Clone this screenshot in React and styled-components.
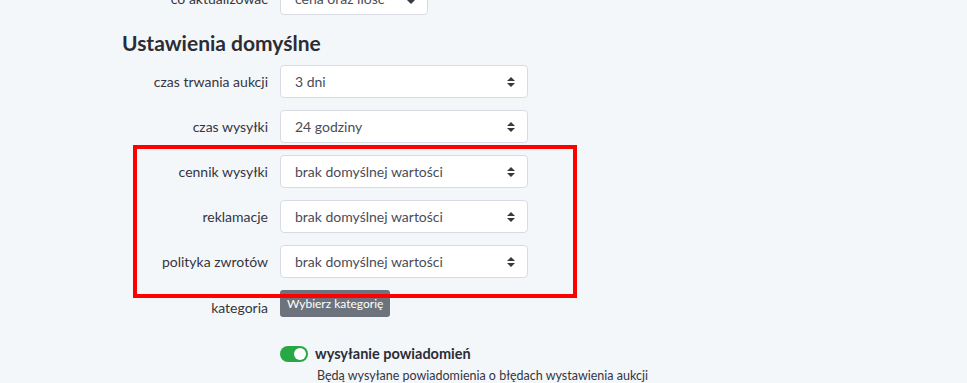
import React from "react";
import styled, { createGlobalStyle } from "styled-components";

const GlobalStyle = createGlobalStyle`
  body {
    margin: 0;
    background: #f4f7fa;
    font-family: "Lato", "Noto Sans", sans-serif;
    color: #3a3b45;
  }
`;

const Page = styled.div`
  position: relative;
  width: 967px;
  height: 383px;
  overflow: hidden;
`;

const Form = styled.div`
  margin-top: -18px;
  padding-left: 122px;
`;

const Grid = styled.div`
  display: grid;
  grid-template-columns: 146px auto;
  column-gap: 12px;
  row-gap: 12px;
  align-items: center;
`;

const Label = styled.div`
  text-align: right;
  font-size: 14px;
  color: #34353f;
  padding-top: ${(p) => (p.$low ? "8px" : "0")};
`;

const Heading = styled.h5`
  margin: 16px 0 10px;
  font-size: 21px;
  font-weight: 700;
  color: #2b2d36;
  line-height: 24px;
`;

const SelectBox = styled.div`
  box-sizing: border-box;
  width: ${(p) => p.$width || 248}px;
  height: 33px;
  display: flex;
  align-items: center;
  justify-content: space-between;
  padding: 0 12px 0 14px;
  background: #fff;
  border: 1px solid #d8dbe3;
  border-radius: 4px;
  font-size: 14px;
  color: #4a4c57;
`;

const Button = styled.button`
  justify-self: start;
  height: 27px;
  padding: 0 7px;
  border: none;
  border-radius: 3px;
  background: #6c737c;
  color: #fff;
  font-family: inherit;
  font-size: 12px;
`;

const ToggleRow = styled.div`
  display: flex;
  align-items: center;
  gap: 7px;
  margin: 28px 0 0 158px;
`;

const Toggle = styled.span`
  position: relative;
  width: 28px;
  height: 16px;
  border-radius: 8px;
  background: #28a745;

  &::after {
    content: "";
    position: absolute;
    top: 2px;
    right: 2px;
    width: 12px;
    height: 12px;
    border-radius: 50%;
    background: #fff;
  }
`;

const ToggleLabel = styled.span`
  font-size: 14.5px;
  font-weight: 700;
  color: #2b2d36;
`;

const Help = styled.div`
  margin: 6px 0 0 195px;
  font-size: 12.5px;
  color: #34353f;
`;

const Highlight = styled.div`
  position: absolute;
  left: 133px;
  top: 145px;
  width: 444px;
  height: 153px;
  box-sizing: border-box;
  border: 4px solid #ff0000;
  pointer-events: none;
`;

const Arrows = () => (
  <svg width="8" height="10" viewBox="0 0 8 10">
    <path d="M4 0 L8 4 H0 Z M0 6 H8 L4 10 Z" fill="#343a40" />
  </svg>
);

const Select = ({ value, width }) => (
  <SelectBox $width={width}>
    <span>{value}</span>
    <Arrows />
  </SelectBox>
);

const rows = [
  ["czas trwania aukcji", "3 dni"],
  ["czas wysyłki", "24 godziny"],
  ["cennik wysyłki", "brak domyślnej wartości"],
  ["reklamacje", "brak domyślnej wartości"],
  ["polityka zwrotów", "brak domyślnej wartości"],
];

export default function App() {
  return (
    <Page>
      <GlobalStyle />
      <Form>
        <Grid>
          <Label>co aktualizować</Label>
          <Select value="cena oraz ilość" width={148} />
        </Grid>
        <Heading>Ustawienia domyślne</Heading>
        <Grid>
          {rows.map(([label, value]) => (
            <React.Fragment key={label}>
              <Label>{label}</Label>
              <Select value={value} />
            </React.Fragment>
          ))}
          <Label $low>kategoria</Label>
          <Button>Wybierz kategorię</Button>
        </Grid>
        <ToggleRow>
          <Toggle />
          <ToggleLabel>wysyłanie powiadomień</ToggleLabel>
        </ToggleRow>
        <Help>Będą wysyłane powiadomienia o błędach wystawienia aukcji</Help>
      </Form>
      <Highlight />
    </Page>
  );
}
